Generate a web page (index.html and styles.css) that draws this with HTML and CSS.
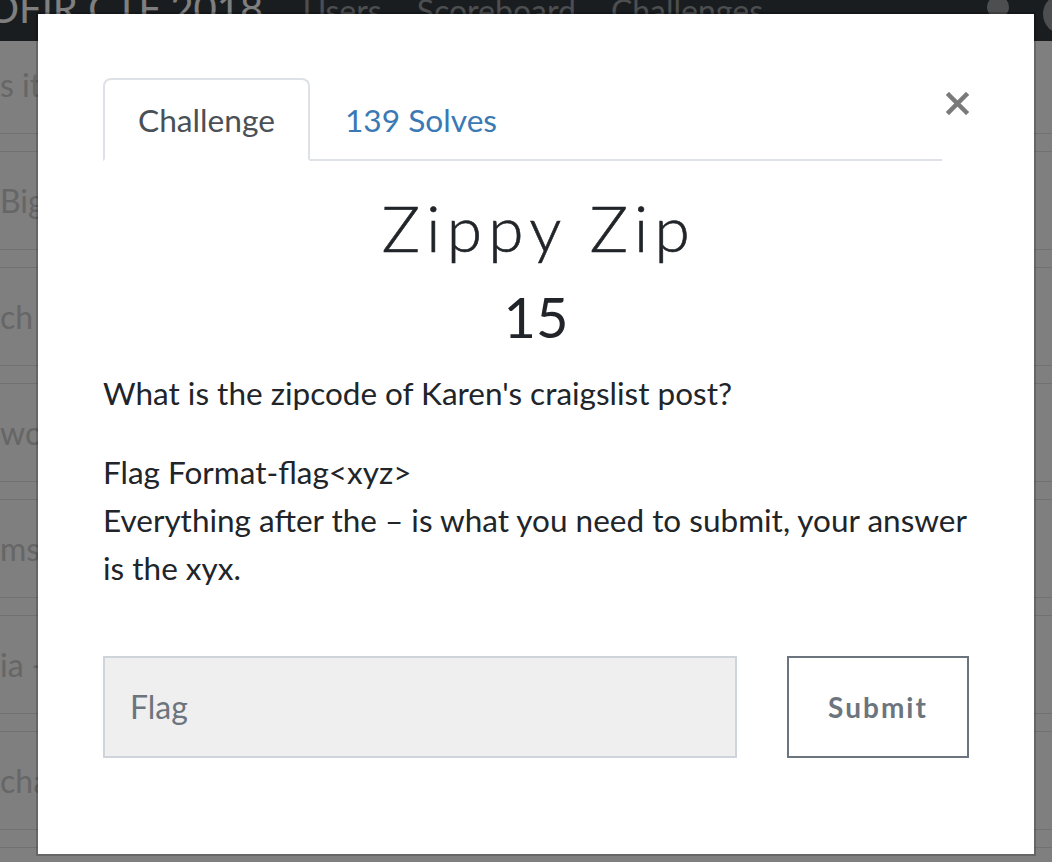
FILE: index.html
```html
<!DOCTYPE html>
<html lang="en">
<head>
    <meta charset="UTF-8">
    <meta name="viewport" content="width=device-width, initial-scale=1.0">
    <title>Zippy Zip</title>
    <link rel="stylesheet" href="styles.css">
</head>
<body>
    <nav class="navbar">
        <span class="brand">OFIR CTF 2018</span>
        <ul class="nav-links">
            <li>Users</li>
            <li>Scoreboard</li>
            <li>Challenges</li>
        </ul>
        <div class="nav-icons">
            <svg class="icon-user" width="22" height="22" viewBox="0 0 22 22"><circle cx="11" cy="11" r="11" fill="#999c9f"/></svg>
            <svg class="icon-logout" width="40" height="40" viewBox="0 0 40 40"><circle cx="20" cy="20" r="20" fill="#999c9f"/></svg>
        </div>
    </nav>

    <div class="challenge-list">
        <div class="challenge-row">s it there</div>
        <div class="challenge-row">Big Brother</div>
        <div class="challenge-row">ch who</div>
        <div class="challenge-row">words</div>
        <div class="challenge-row">ms</div>
        <div class="challenge-row">ia - part</div>
        <div class="challenge-row">chat</div>
        <div class="challenge-row">last</div>
    </div>

    <div class="backdrop"></div>

    <div class="modal">
        <div class="modal-header">
            <ul class="nav-tabs">
                <li class="tab active">Challenge</li>
                <li class="tab"><a href="#solves">139 Solves</a></li>
            </ul>
            <button type="button" class="close-btn" aria-label="Close">
                <svg width="23" height="23" viewBox="0 0 23 23">
                    <path d="M3 3 L20 20 M20 3 L3 20" stroke="#7a7a7a" stroke-width="4.5" stroke-linecap="square"/>
                </svg>
            </button>
        </div>

        <h2 class="challenge-name">Zippy Zip</h2>
        <h3 class="challenge-value">15</h3>

        <p class="description">What is the zipcode of Karen's craigslist post?</p>
        <p class="description second">Flag Format-flag&lt;xyz&gt;<br>Everything after the – is what you need to submit, your answer<br>is the xyx.</p>

        <form class="flag-form">
            <input type="text" class="flag-input" placeholder="Flag">
            <button type="button" class="submit-btn">Submit</button>
        </form>
    </div>
</body>
</html>
```

FILE: styles.css
```css
html, body {
    height: 100%;
}

body {
    font-family: Lato, "Open Sans", sans-serif;
    background-color: #ffffff;
    color: #212529;
    margin: 0;
    padding: 0;
    overflow: hidden;
}

.navbar {
    position: relative;
    z-index: 1;
    height: 41px;
    background-color: #343a40;
    display: flex;
    align-items: flex-start;
    overflow: hidden;
}

.brand {
    font-size: 40px;
    line-height: 40px;
    margin-top: -12px;
    margin-left: -13px;
    color: #ffffff;
    white-space: nowrap;
}

.nav-links {
    display: flex;
    list-style: none;
    margin: -9px 0 0 22px;
    padding: 0;
}

.nav-links li {
    font-size: 32px;
    line-height: 40px;
    padding: 0 17.5px;
    color: #999c9f;
}

.nav-icons {
    margin-left: auto;
    display: flex;
    align-items: flex-start;
    gap: 34px;
    margin-right: -31px;
}

.icon-user {
    margin-top: -4px;
}

.icon-logout {
    margin-top: -6px;
}

.challenge-list {
    margin-top: -6px;
    height: 827px;
    overflow: hidden;
    display: flex;
    flex-direction: column;
    gap: 17px;
}

.challenge-row {
    flex: none;
    height: 97px;
    border-top: 1px solid #dee2e6;
    border-bottom: 1px solid #dee2e6;
    display: flex;
    align-items: center;
    font-size: 32px;
    color: #cccccc;
    white-space: nowrap;
}

.backdrop {
    position: fixed;
    inset: 0;
    background-color: rgba(0, 0, 0, 0.5);
    z-index: 2;
}

.modal {
    position: fixed;
    z-index: 3;
    top: 12px;
    left: 36px;
    width: 1000px;
    box-sizing: border-box;
    border: 2px solid rgba(0, 0, 0, 0.2);
    background-color: #ffffff;
    background-clip: padding-box;
    padding: 64px 65px 96px;
}

.modal-header {
    display: flex;
    align-items: flex-start;
}

.nav-tabs {
    flex: 1;
    display: flex;
    list-style: none;
    margin: 0;
    padding: 0;
    border-bottom: 2px solid #dee2e6;
}

.tab {
    font-size: 31.7px;
    line-height: 48px;
    padding: 16px 33px 15px;
    border: 2px solid transparent;
    border-radius: 8px 8px 0 0;
    margin-bottom: -2px;
}

.tab.active {
    color: #495057;
    border-color: #dee2e6 #dee2e6 #ffffff;
}

.tab a {
    color: #3b79b5;
    text-decoration: none;
}

.close-btn {
    width: 27px;
    margin-top: 14px;
    padding: 0;
    border: none;
    background: none;
    display: flex;
    justify-content: flex-end;
}

.challenge-name {
    font-size: 64px;
    font-weight: 300;
    line-height: 1.2;
    letter-spacing: 6.3px;
    padding-left: 6px;
    text-align: center;
    margin: 29px 0 0;
    -webkit-text-stroke: 0.6px #212529;
}

.challenge-value {
    font-size: 56px;
    font-weight: 400;
    line-height: 1.2;
    text-align: center;
    margin: 16px 0 0;
}

.description {
    font-size: 31.5px;
    line-height: 48px;
    margin: 19px 0 0;
    white-space: nowrap;
}

.description.second {
    margin-top: 31px;
}

.flag-form {
    display: flex;
    gap: 50px;
    margin-top: 64px;
}

.flag-input {
    flex: 1;
    height: 102px;
    box-sizing: border-box;
    border: 2px solid #ced4da;
    background-color: #efefef;
    font-family: Lato, sans-serif;
    font-size: 32px;
    padding: 0 25px;
    color: #495057;
}

.flag-input::placeholder {
    color: #6c757d;
}

.submit-btn {
    width: 182px;
    height: 102px;
    box-sizing: border-box;
    border: 2px solid #6c757d;
    background-color: #ffffff;
    color: #6c757d;
    font-family: Lato, sans-serif;
    font-size: 28px;
    font-weight: 700;
    letter-spacing: 2px;
}
```
